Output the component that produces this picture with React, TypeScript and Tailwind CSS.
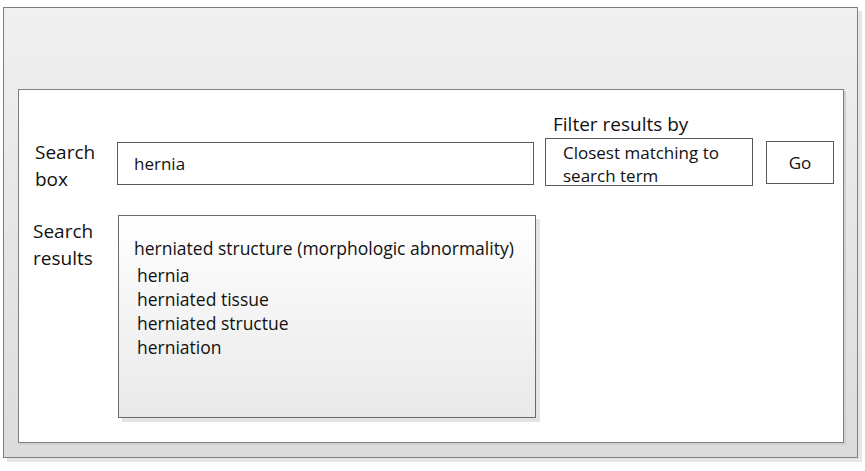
const results = ["hernia", "herniated tissue", "herniated structue", "herniation"]

export default function App() {
  return (
    <div className="w-[865px] h-[471px] bg-white font-['Open_Sans',sans-serif] text-[#111] pt-[7px] pl-[3px]">
      {/* outer window */}
      <div className="w-[855px] h-[451px] border-[1.5px] border-[#7f7f7f] bg-gradient-to-b from-[#f0f0f0] to-[#dcdcdc] shadow-[4px_4px_0_#e6e6e6] pt-[81px] pl-[14px]">
        {/* white panel */}
        <div className="relative w-[826px] h-[354px] border-[1.5px] border-[#7f7f7f] bg-white shadow-[2px_2px_0_#d0d0d0]">
          <div className="flex items-start pt-[50px]">
            <div className="w-[98px] pl-[16px] -mt-[1px] text-[19px] leading-[27px]">
              <div>Search</div>
              <div>box</div>
            </div>
            <div className="w-[417px] h-[43px] mt-[2px] border border-[#595959] flex items-center pl-[16px] text-[17px]">
              hernia
            </div>
            <div className="ml-[11px] -mt-[28px]">
              <div className="pl-[8px] text-[19px] leading-[25px]">Filter results by</div>
              <div className="w-[208px] h-[48px] mt-[1px] border border-[#595959] pl-[17px] pt-[2px] text-[17px] leading-[23px]">
                <div>Closest matching to</div>
                <div>search term</div>
              </div>
            </div>
            <div className="ml-[13px] mt-[1px] w-[68px] h-[43px] border border-[#595959] flex items-center justify-center text-[17px]">
              Go
            </div>
          </div>
          <div className="flex items-start mt-[22px]">
            <div className="w-[99px] pl-[14px] mt-[3px] text-[19px] leading-[27px]">
              <div>Search</div>
              <div>results</div>
            </div>
            <div className="w-[418px] h-[203px] border border-[#6b6b6b] bg-gradient-to-b from-white to-[#e9e9e9] shadow-[4px_4px_0_#e4e4e4] pt-[20px] pl-[15px] text-[17.5px] leading-[24px]">
              <div>herniated structure (morphologic abnormality)</div>
              <div className="pl-[3px] pt-[3px]">
                {results.map((r) => (
                  <div key={r}>{r}</div>
                ))}
              </div>
            </div>
          </div>
        </div>
      </div>
    </div>
  )
}
